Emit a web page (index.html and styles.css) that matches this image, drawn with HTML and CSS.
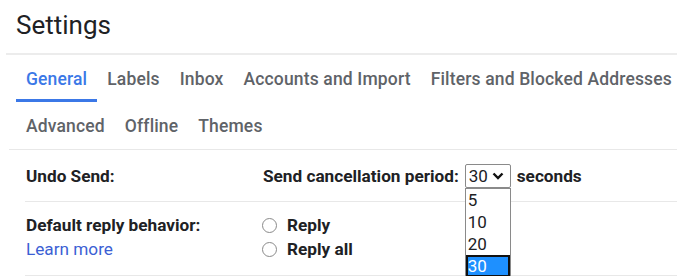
FILE: index.html
```html
<!DOCTYPE html>
<html lang="en">
<head>
    <meta charset="UTF-8">
    <title>Settings</title>
    <link rel="stylesheet" href="styles.css">
</head>
<body>

    <div class="page-header">
        <h1>Settings</h1>
    </div>

    <div class="tabs">
        <div class="tab-row">
            <span class="tab active">General</span>
            <span class="tab">Labels</span>
            <span class="tab">Inbox</span>
            <span class="tab">Accounts and Import</span>
            <span class="tab">Filters and Blocked Addresses</span>
        </div>
        <div class="tab-row">
            <span class="tab">Advanced</span>
            <span class="tab">Offline</span>
            <span class="tab">Themes</span>
        </div>
    </div>

    <div class="settings-table">
        <div class="setting-row undo-row">
            <div class="setting-label">Undo Send:</div>
            <div class="setting-value">
                <span>Send cancellation period:</span>
                <div class="select-wrap">
                    <div class="fake-select">
                        <span>30</span>
                        <svg class="chevron" width="12" height="8" viewBox="0 0 12 8">
                            <path d="M1.5 1.5 L6 6 L10.5 1.5" fill="none" stroke="#111" stroke-width="2.4"/>
                        </svg>
                    </div>
                    <ul class="select-menu">
                        <li>5</li>
                        <li>10</li>
                        <li>20</li>
                        <li class="selected">30</li>
                    </ul>
                </div>
                <span>seconds</span>
            </div>
        </div>

        <div class="setting-row reply-row">
            <div class="setting-label">
                Default reply behavior:
                <a class="learn-more" href="#">Learn more</a>
            </div>
            <div class="setting-value radio-list">
                <label class="radio-option"><span class="radio"></span>Reply</label>
                <label class="radio-option"><span class="radio"></span>Reply all</label>
            </div>
        </div>
    </div>

</body>
</html>
```

FILE: styles.css
```css
/* Gmail-ish settings page */

:root {
    --text-color: #202124;
    --tab-color: #5f6368;
    --blue: #3b78e7;
    --link-color: #3c5fd4;
    --line-color: #e8e8e8;
}

body {
    margin: 0;
    background: #ffffff;
    font-family: Roboto, 'Liberation Sans', Arial, sans-serif;
    color: var(--text-color);
    overflow: hidden;
}

/* --- Header --- */
.page-header {
    margin-left: 6px;
    height: 55px;
    border-bottom: 2px solid #ececec;
    box-sizing: border-box;
}

.page-header h1 {
    margin: 0;
    padding: 9px 0 0 10px;
    font-size: 26px;
    font-weight: 400;
    line-height: 32px;
}

/* --- Tabs --- */
.tabs {
    border-bottom: 1px solid var(--line-color);
    margin-left: 9px;
    padding-left: 7px;
}

.tab-row {
    display: flex;
    height: 47px;
    white-space: nowrap;
}

.tab {
    display: flex;
    align-items: center;
    padding: 0 10px;
    font-size: 17.5px;
    font-weight: 500;
    color: var(--tab-color);
    letter-spacing: 0.15px;
    box-sizing: border-box;
}

.tab.active {
    color: var(--blue);
    border-bottom: 3px solid var(--blue);
    padding-top: 3px;
}

/* --- Settings rows --- */
.settings-table {
    margin-left: 25px;
}

.setting-row {
    display: flex;
    border-bottom: 1px solid var(--line-color);
    font-size: 17.2px;
    font-weight: 700;
}

.setting-label {
    width: 237px;
    padding-left: 1px;
    flex-shrink: 0;
}

.setting-value {
    display: flex;
    align-items: center;
    gap: 6px;
}

.undo-row {
    height: 52px;
    align-items: center;
    box-sizing: border-box;
}

.reply-row {
    height: 74px;
    padding-top: 13px;
    box-sizing: border-box;
}

.learn-more {
    display: block;
    margin-top: 4px;
    color: var(--link-color);
    font-weight: 400;
    text-decoration: none;
}

/* --- Select --- */
.select-wrap {
    position: relative;
}

.fake-select {
    display: flex;
    align-items: center;
    gap: 4px;
    width: 46px;
    height: 24px;
    padding: 0 0 0 3px;
    border: 1px solid #8a8a8a;
    border-radius: 2px;
    box-sizing: border-box;
    font-weight: 400;
    font-size: 17px;
}

.select-menu {
    position: absolute;
    top: 24px;
    left: 0;
    width: 46px;
    margin: 0;
    padding: 0;
    list-style: none;
    background: #ffffff;
    border: 1px solid #8a8a8a;
    border-bottom: none;
    box-sizing: border-box;
    font-weight: 400;
    font-size: 17px;
}

.select-menu li {
    height: 22px;
    line-height: 22px;
    padding-left: 2px;
}

.select-menu li.selected {
    background: #1e90ff;
    color: #ffffff;
    outline: 2px solid #111;
    outline-offset: -2px;
}

/* --- Radios --- */
.radio-list {
    flex-direction: column;
    align-items: flex-start;
    gap: 4px;
}

.radio-option {
    display: flex;
    align-items: center;
    gap: 10px;
    height: 20px;
}

.radio {
    width: 15px;
    height: 15px;
    border: 1px solid #8a8a8a;
    border-radius: 50%;
    margin-left: -1px;
    box-sizing: border-box;
}
```
